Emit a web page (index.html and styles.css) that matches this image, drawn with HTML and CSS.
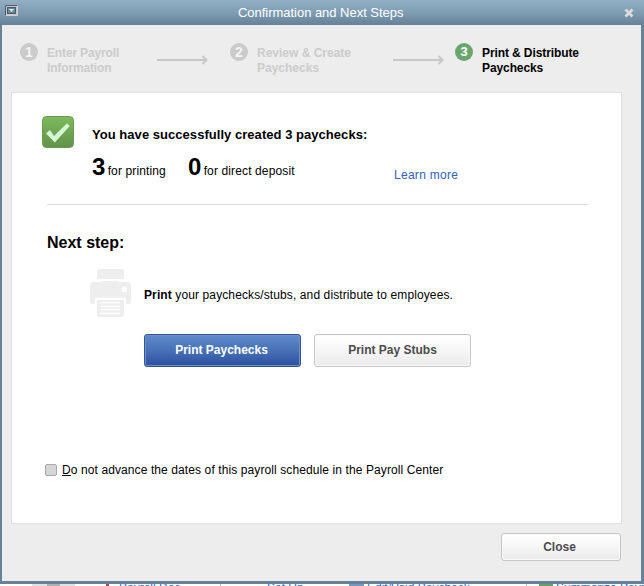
FILE: index.html
```
<!DOCTYPE html>
<html lang="en">
<head>
<meta charset="utf-8">
<title>Confirmation and Next Steps</title>
<link rel="stylesheet" href="styles.css">
</head>
<body>
<main class="dialog">
  <header class="titlebar">
    <svg class="sysmenu" width="13" height="11" viewBox="0 0 13 11"><path d="M.5 10V.5H12" fill="none" stroke="#4e5a68"/><path d="M1 10.5H12.5V1" fill="none" stroke="#d0d0d0"/><rect x="1.5" y="1.5" width="10" height="8" fill="none" stroke="#c4c8cc"/><rect x="2.5" y="2.5" width="8" height="6" fill="#6789a2" stroke="#485869"/><path d="M4 4H9L6.500 7Z" fill="#e4e4e4"/></svg>
    <h1 class="title">Confirmation and Next Steps</h1>
    <svg class="dismiss" width="10" height="10" viewBox="0 0 10 10"><path d="M1.500 1.500 8.500 8.500M8.500 1.500 1.500 8.500" stroke="#dadada" stroke-width="2.800"/></svg>
  </header>
  <div class="body">
    <nav class="steps">
      <div class="step"><span class="num">1</span><span class="label l1">Enter Payroll<br>Information</span></div>
      <svg class="arrow a1" width="51" height="10" viewBox="0 0 51 10"><path d="M0 5H49M45.500 1 49.500 5 45.500 9" fill="none" stroke="#c8c8c8" stroke-width="2"/></svg>
      <div class="step"><span class="num">2</span><span class="label">Review &amp; Create<br>Paychecks</span></div>
      <svg class="arrow a2" width="51" height="10" viewBox="0 0 51 10"><path d="M0 5H49M45.500 1 49.500 5 45.500 9" fill="none" stroke="#c8c8c8" stroke-width="2"/></svg>
      <div class="step current"><span class="num">3</span><span class="label l3">Print &amp; Distribute<br>Paychecks</span></div>
    </nav>
    <section class="panel">
      <div class="summary">
        <svg class="check" width="32" height="32" viewBox="0 0 32 32"><defs><linearGradient id="g" x2="0" y2="1"><stop stop-color="#7dbb5a"/><stop offset="1" stop-color="#61914a"/></linearGradient></defs><rect x=".5" y=".5" width="31" height="31" rx="4" fill="url(#g)" stroke="#699c50"/><path d="M4 17.500 8 14 12 20 25 7.200 27.800 10 12.800 26.500Z" fill="#d5f5d6"/></svg>
        <div class="result">
          <h2 class="created">You have successfully created 3 paychecks:</h2>
          <div class="counts">
            <span class="count c1"><b>3</b> <span>for printing</span></span>
            <span class="count c2"><b>0</b> <span>for direct deposit</span></span>
            <a class="learn">Learn more</a>
          </div>
        </div>
      </div>
      <h2 class="next">Next step:</h2>
      <div class="print">
        <svg class="printer" width="42" height="50" viewBox="0 0 42 50"><path d="M9 1H32Q34 1 34 3V11H7V3Q7 1 9 1ZM3 14H12V13H29V14H38Q41 15 41 18V34Q41 36 39 36H36V31H5V36H2Q0 36 0 34V18Q0 15 3 14ZM7 32H34V47Q34 49 32 49H9Q7 49 7 47Z" fill="#eeeeee"/><circle cx="34.500" cy="21.500" r="2.700" fill="#fff"/><path d="M5.500 30.500H35.500M10.500 34.500H30M10.500 38.500H30M10.500 41.500H30M10.500 45.500H30" stroke="#fff" stroke-width="1.300"/></svg>
        <p class="instr"><b>Print</b> your paychecks/stubs, and distribute to employees.</p>
      </div>
      <div class="actions">
        <button class="btn primary"><span>Print Paychecks</span></button>
        <button class="btn"><span>Print Pay Stubs</span></button>
      </div>
      <div class="option"><span class="box"></span><span class="opt"><u>D</u>o not advance the dates of this payroll schedule in the Payroll Center</span></div>
    </section>
    <footer class="footer"><button class="btn close"><span>Close</span></button></footer>
  </div>
</main>
<div class="behind">
  <i class="thumb"></i><i class="red"></i><span class="bt b1">Payroll Doc</span><i class="rule"></i><span class="bt b2">Set Up</span><i class="doc"></i><span class="bt b3">Edit/Void Paycheck</span><i class="rule"></i><i class="green"></i><span class="bt b4">Summarize Payr</span>
</div>
</body>
</html>
```
FILE: styles.css
```
* { box-sizing: border-box; }
body { margin: 0; width: 644px; height: 586px; overflow: hidden; background: #fff; color: #000; font: 12px/15px "Liberation Sans", Arial, sans-serif; }
h1, h2, p { margin: 0; white-space: nowrap; }
.dialog { height: 584px; border: solid #668399; border-width: 0 3px 3px 2px; display: flex; flex-direction: column; }
.titlebar { height: 25px; margin: 0 -3px 0 -2px; padding: 0 10px 0 5px; background: linear-gradient(#91aec4, #809fb5 45%, #668198); display: flex; align-items: center; }
.sysmenu { margin-top: -4px; }
.title { margin-left: 220px; flex: 1; font-weight: 400; font-size: 13px; letter-spacing: -.03px; color: #fff; }
.body { flex: 1; background: #ededed; display: flex; flex-direction: column; }
.steps { height: 67px; padding: 18px 0 0 18px; display: flex; align-items: flex-start; }
.step { display: flex; color: #cbcbcb; font-weight: 700; width: 137px; }
.num { width: 18px; height: 18px; border-radius: 50%; background: #cbcbcb; color: #f4f4f4; font-size: 14px; line-height: 18px; text-align: center; }
.label { margin: 3px 0 0 9px; white-space: nowrap; }
.l1 { letter-spacing: -.15px; }
.l3 { letter-spacing: -.1px; }
.a1 { margin: 12px 22px 0 0; }
.a2 { margin: 12px 11px 0 26px; }
.current { color: #000; }
.current .num { background: #6aa66b; color: #fff; font-size: 13px; }
.panel { height: 432px; width: 611px; margin-left: 9px; border: 1px solid #dfdfdf; background: #fff; padding: 23px 32px 0 30px; }
.summary { display: flex; height: 88px; }
.result { margin-left: 18px; padding-top: 11px; }
.created { font-size: 13px; line-height: 15px; letter-spacing: .04px; }
.counts { display: flex; margin-top: 10px; }
.count { white-space: nowrap; line-height: 30px; letter-spacing: .13px; }
.count b { font-size: 24px; line-height: 30px; letter-spacing: -1.2px; }
.c1 { width: 96px; }
.c2 { width: 206px; }
.learn { color: #3560be; line-height: 15px; margin-top: 16px; letter-spacing: .28px; white-space: nowrap; }
.next { margin-left: 5px; padding-top: 28px; border-top: 1px solid #dcdcdc; font-size: 16px; line-height: 20px; }
.print { display: flex; margin: 15px 0 0 48px; height: 50px; }
.instr { margin: 20px 0 0 12px; letter-spacing: .11px; }
.actions { display: flex; gap: 13px; margin: 16px 0 0 102px; }
.btn { flex: none; width: 157px; height: 33px; padding: 0; border: 1px solid #c5c5c5; border-radius: 3px; background: linear-gradient(#fff, #f8f8f8 40%, #eaeaea); box-shadow: inset 0 0 0 1px #fafafa; color: #4c4c4c; font: 700 12px/15px "Liberation Sans", Arial, sans-serif; }
.primary { padding-right: 2px; border-color: #335393; background: linear-gradient(#5e8acb, #4871b6 50%, #2c4fa0); box-shadow: inset 0 0 0 1px #6a92d0; color: #fff; }
.option { display: flex; margin: 95px 0 0 3px; }
.box { width: 12px; height: 12px; margin-top: 2px; border: 1px solid #a9a9a9; border-radius: 2px; background: #d5d5d5; }
.opt { margin: 1px 0 0 5px; white-space: nowrap; letter-spacing: .1px; }
.footer { padding: 9px 20px 0 0; display: flex; justify-content: flex-end; }
.close { width: 120px; height: 28px; padding-right: 3px; }
.behind { height: 2px; overflow: hidden; display: flex; padding-left: 32px; color: #3c66cf; white-space: nowrap; }
.bt { line-height: 12px; margin-top: -2px; overflow: hidden; flex: none; }
.thumb { width: 43px; height: 2px; background: linear-gradient(90deg, #e2e2e2 35%, #b0b0b0 35% 65%, #e2e2e2 65%); flex: none; }
.red { width: 3px; height: 2px; margin: 0 10px 0 31px; background: #a34b50; flex: none; }
.b1 { width: 101px; }
.rule { width: 1px; height: 2px; background: #bbb; flex: none; }
.b2 { width: 82px; margin-left: 46px; }
.doc { width: 15px; height: 2px; background: #7797be; margin-right: 3px; flex: none; }
.b3 { width: 159px; }
.green { width: 14px; height: 2px; background: #6b9e66; margin: 0 3px 0 12px; flex: none; }
```
